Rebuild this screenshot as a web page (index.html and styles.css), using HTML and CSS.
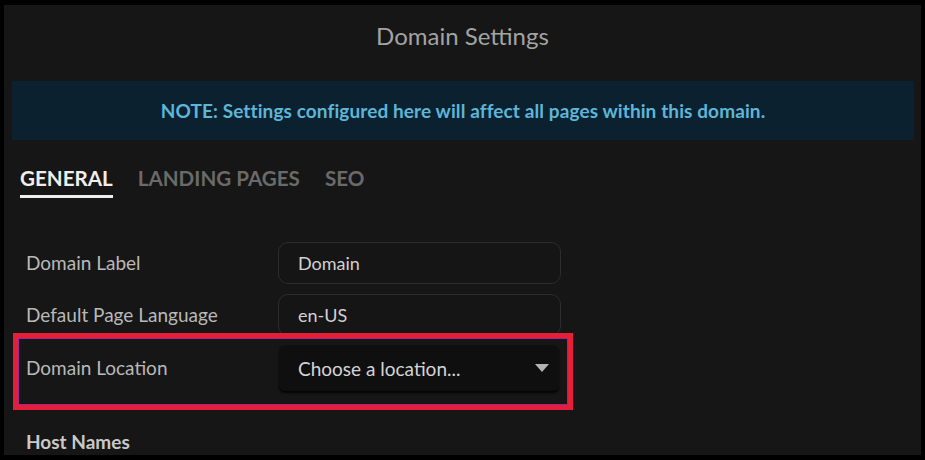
FILE: index.html
```html
<!DOCTYPE html>
<html>
<head>
<meta charset="utf-8">
<link rel="stylesheet" href="styles.css">
</head>
<body>
<div class="panel">
  <div class="title">Domain Settings</div>
  <div class="note">NOTE: Settings configured here will affect all pages within this domain.</div>
  <div class="tabs">
    <div class="tab active">GENERAL</div>
    <div class="tab">LANDING PAGES</div>
    <div class="tab">SEO</div>
  </div>
  <div class="form">
    <div class="row row1">
      <div class="label">Domain Label</div>
      <div class="input">Domain</div>
    </div>
    <div class="row row2">
      <div class="label">Default Page Language</div>
      <div class="input">en-US</div>
    </div>
    <div class="row row3">
      <div class="label">Domain Location</div>
      <div class="select">
        <span>Choose a location...</span>
        <svg class="caret" width="14" height="8" viewBox="0 0 14 8"><path d="M0 0 H14 L7 8 Z" fill="#b4b4b4"/></svg>
      </div>
    </div>
    <div class="highlight"></div>
    <div class="section">Host Names</div>
  </div>
</div>
</body>
</html>
```
FILE: styles.css
```css
html, body {
  margin: 0;
  padding: 0;
  background: #000;
  height: 460px;
  overflow: hidden;
}
body {
  font-family: Lato, "Liberation Sans", sans-serif;
}
.panel {
  margin: 5px 4px 0 4px;
  height: 450px;
  background: #161616;
  overflow: hidden;
}
.title {
  height: 62px;
  line-height: 62px;
  text-align: center;
  font-size: 24px;
  color: #a3a3a3;
  margin-bottom: 14px;
}
.note {
  margin: 0 7px 0 8px;
  height: 59px;
  line-height: 59px;
  background: #0c2130;
  color: #5db6d8;
  font-weight: 700;
  font-size: 19px;
  letter-spacing: 0.1px;
  text-align: center;
}
.tabs {
  display: flex;
  gap: 25px;
  padding-left: 16px;
  margin-top: 23px;
}
.tab {
  font-size: 20.6px;
  font-weight: 700;
  color: #6a6a6a;
  height: 32px;
  line-height: 30px;
}
.tab.active {
  color: #eeeeee;
  border-bottom: 3px solid #eeeeee;
}
.form {
  position: relative;
  padding-left: 22px;
  margin-top: 44px;
}
.row {
  display: flex;
  align-items: center;
}
.label {
  width: 252px;
  font-size: 19px;
  color: #b9b9b9;
  padding-bottom: 2px;
}
.input {
  box-sizing: border-box;
  width: 283px;
  height: 42px;
  border: 1px solid #2d2d2d;
  border-radius: 10px;
  padding-left: 19px;
  line-height: 40px;
  font-size: 18px;
  color: #d2d2d2;
  background: #151515;
}
.row2 {
  margin-top: 10px;
}
.row3 {
  margin-top: 9px;
}
.select {
  box-sizing: border-box;
  width: 280px;
  height: 46px;
  margin-left: 1px;
  border-radius: 6px;
  background: #0f0f0f;
  box-shadow: 0 2px 2px #050505;
  display: flex;
  align-items: center;
  justify-content: space-between;
  padding: 0 10px 0 19px;
  font-size: 19px;
  color: #d4d4d4;
}
.caret {
  display: block;
}
.highlight {
  position: absolute;
  left: 9px;
  top: 91px;
  width: 560px;
  height: 77px;
  box-sizing: border-box;
  border: 5px solid #e61e3a;
  box-shadow: inset 0 0 0 1px #a0268e;
  pointer-events: none;
}
.section {
  margin-top: 39px;
  font-size: 19px;
  font-weight: 700;
  color: #c9c9c9;
}
```
